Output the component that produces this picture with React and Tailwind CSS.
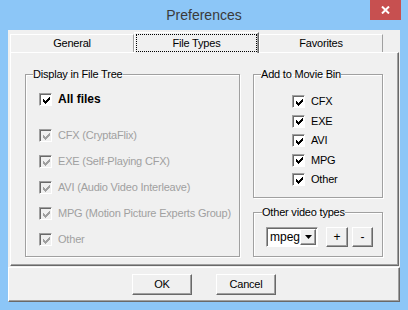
import React from "react";

const raised =
  "border border-t-white border-l-white border-r-[#696969] border-b-[#696969] shadow-[inset_-1px_-1px_0_#a0a0a0]";
const sunken =
  "border border-t-[#a0a0a0] border-l-[#a0a0a0] border-r-white border-b-white shadow-[inset_1px_1px_0_#696969]";
const group =
  "border border-[#a0a0a0] shadow-[1px_1px_0_#fff,inset_1px_1px_0_#fff] min-w-0";

const CheckBox = ({ disabled }) => (
  <span
    className={`w-[13px] h-[13px] shrink-0 flex items-center justify-center ${sunken} ${
      disabled ? "bg-[#f0f0f0]" : "bg-white"
    }`}
  >
    <svg width="7" height="7" viewBox="0 0 7 7" className="ml-[1px] mt-[1px]">
      <path
        d="M0 2h1v1h1v1h1V3h1V2h1V1h1V0h1v3h-1v1h-1v1h-1v1h-1v1h-1V6h-1V5H0z"
        fill={disabled ? "#a0a0a0" : "#000"}
      />
    </svg>
  </span>
);

const Row = ({ label, disabled, bold }) => (
  <div className="flex items-center h-[13px] gap-[6px]">
    <CheckBox disabled={disabled} />
    <span
      className={`leading-[13px] whitespace-nowrap ${
        disabled ? "text-[#a0a0a0]" : "text-black"
      } ${bold ? "font-bold text-[12px] tracking-normal" : ""}`}
    >
      {label}
    </span>
  </div>
);

const Button = ({ children, className = "" }) => (
  <button className={`flex items-center justify-center bg-[#f0f0f0] text-black ${raised} ${className}`}>
    {children}
  </button>
);

const Tab = ({ label, active }) =>
  active ? (
    <div className="w-[125px] h-[21px] -mb-[1px] relative z-10 bg-[#f0f0f0] border-t border-l border-t-white border-l-white border-r border-r-[#696969] shadow-[inset_-1px_0_0_#a0a0a0] flex items-start justify-center pt-[1px] px-[1px]">
      <div className="w-full h-[18px] border border-dotted border-black flex items-center justify-center">
        {label}
      </div>
    </div>
  ) : (
    <div className="w-[124px] h-[18px] mt-[2px] bg-[#f0f0f0] border-t border-l border-t-white border-l-white border-r border-r-[#a0a0a0] flex items-center justify-center">
      {label}
    </div>
  );

export default function App() {
  return (
    <div className="w-[408px] h-[310px] bg-[#8cc6f7] flex flex-col font-['Liberation_Sans',Arial,sans-serif] text-[11px] tracking-[-0.2px] text-black">
      {/* title bar */}
      <div className="h-[30px] flex items-start shrink-0">
        <div className="w-[38px]" />
        <div className="flex-1 h-full flex items-center justify-center text-[14px] tracking-normal text-[#3a3a3a]">
          Preferences
        </div>
        <button className="w-[31px] h-[20px] mr-[7px] bg-[#c75050] flex items-center justify-center">
          <svg width="9" height="8" viewBox="0 0 9 8">
            <path d="M1 0.5L8 7.5M8 0.5L1 7.5" stroke="#fff" strokeWidth="2" />
          </svg>
        </button>
      </div>

      {/* client */}
      <div className="mx-[8px] mb-[8px] flex-1 bg-[#f0f0f0] flex flex-col">
        <div className="pt-[2px] pl-[2px] pr-[1px] flex flex-col">
          <div className="flex h-[20px] items-start">
            <Tab label="General" />
            <Tab label="File Types" active />
            <Tab label="Favorites" />
          </div>
          <div className="h-[214px] border-l border-t border-l-white border-t-white border-r border-b border-r-[#696969] border-b-[#696969] shadow-[inset_-1px_-1px_0_#a0a0a0] flex pt-[15px] pl-[14px] gap-[13px]">
            <fieldset className={`w-[215px] h-[189px] ${group}`}>
              <legend className="ml-[7px] leading-[13px] whitespace-nowrap">Display in File Tree</legend>
              <div className="pl-[13px] pt-[12px]">
                <Row label="All files" bold />
                <div className="mt-[23px] flex flex-col gap-[13px]">
                  <Row label="CFX (CryptaFlix)" disabled />
                  <Row label="EXE (Self-Playing CFX)" disabled />
                  <Row label="AVI (Audio Video Interleave)" disabled />
                  <Row label="MPG (Motion Picture Experts Group)" disabled />
                  <Row label="Other" disabled />
                </div>
              </div>
            </fieldset>

            <div className="w-[130px] flex flex-col">
              <fieldset className={`h-[130px] ${group}`}>
                <legend className="ml-[7px] leading-[13px] whitespace-nowrap">Add to Movie Bin</legend>
                <div className="pl-[38px] pt-[14px] flex flex-col gap-[6.5px]">
                  <Row label="CFX" />
                  <Row label="EXE" />
                  <Row label="AVI" />
                  <Row label="MPG" />
                  <Row label="Other" />
                </div>
              </fieldset>
              <fieldset className={`mt-[8px] h-[51px] ${group}`}>
                <legend className="ml-[8px] leading-[13px] whitespace-nowrap">Other video types</legend>
                <div className="pl-[12px] pt-[8px] flex items-center">
                  <div className={`w-[52px] h-[20px] bg-white flex items-center ${sunken}`}>
                    <span className="flex-1 pl-[3px] text-[12px] tracking-normal leading-[14px]">mpeg</span>
                    <span className={`w-[17px] h-[16px] mr-[1px] bg-[#f0f0f0] flex items-center justify-center ${raised}`}>
                      <svg width="7" height="4" viewBox="0 0 7 4">
                        <path d="M0 0h7L3.5 4z" fill="#000" />
                      </svg>
                    </span>
                  </div>
                  <Button className="ml-[8px] w-[22px] h-[20px] text-[12px]">+</Button>
                  <Button className="ml-[4px] w-[21px] h-[20px] text-[12px]">-</Button>
                </div>
              </fieldset>
            </div>
          </div>
        </div>

        <div className={`flex-1 mt-[1px] flex items-center justify-center gap-[24px] ${raised}`}>
          <Button className="w-[60px] h-[21px]">OK</Button>
          <Button className="w-[60px] h-[21px]">Cancel</Button>
        </div>
      </div>
    </div>
  );
}
